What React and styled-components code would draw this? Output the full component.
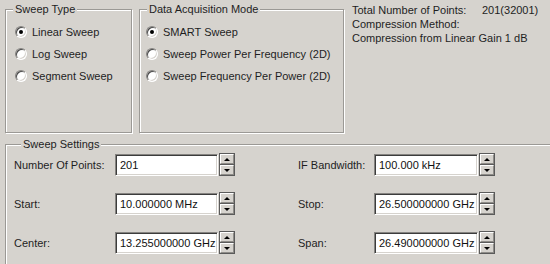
import React from "react";
import styled, { createGlobalStyle } from "styled-components";

const GlobalStyle = createGlobalStyle`
  html, body { margin: 0; padding: 0; background: #d6d3ce; }
  body {
    font-family: "Liberation Sans", Arial, sans-serif;
    font-size: 11px;
    color: #1e1e1e;
  }
`;

const Root = styled.div`
  width: 550px;
  height: 264px;
  overflow: hidden;
  background: #d6d3ce;
  display: flex;
  flex-direction: column;
`;

const TopRow = styled.div`
  display: flex;
  align-items: flex-start;
  padding: 3px 0 0 5px;
  height: 133px;
  box-sizing: border-box;
`;

const GroupBox = styled.fieldset`
  margin: 0 ${(p) => p.$mr || 0}px 0 0;
  padding: 0;
  min-width: 0;
  box-sizing: border-box;
  width: ${(p) => p.$w}px;
  height: ${(p) => p.$h}px;
  flex: none;
  border: 1px solid #9b9995;
  box-shadow: inset 1px 1px 0 #ffffff, 1px 1px 0 #ffffff;
`;

const Legend = styled.legend`
  margin-left: 7px;
  padding: 0 2px;
  line-height: 13px;
  background: #d6d3ce;
`;

const RadioList = styled.div`
  display: flex;
  flex-direction: column;
  padding: 5px 0 0 ${(p) => p.$indent}px;
`;

const RadioRow = styled.label`
  display: flex;
  align-items: center;
  gap: 5px;
  height: 22px;
  white-space: nowrap;
`;

const RadioCircle = styled.span`
  position: relative;
  flex: none;
  width: 12px;
  height: 12px;
  box-sizing: border-box;
  border-radius: 50%;
  border: 1px solid;
  border-color: #858380 #ffffff #ffffff #858380;
  background: #ffffff;
  box-shadow: inset 1px 1px 0 #4a4a4a, inset -1px -1px 0 #d6d3ce;
  &::after {
    content: "";
    display: ${(p) => (p.$checked ? "block" : "none")};
    position: absolute;
    left: 3px;
    top: 3px;
    width: 4px;
    height: 4px;
    border-radius: 50%;
    background: #000;
  }
`;

const InfoGrid = styled.div`
  display: grid;
  grid-template-columns: 130px auto;
  line-height: 14px;
  white-space: nowrap;
`;

const InfoWide = styled.div`
  grid-column: 1 / -1;
`;

const SettingsBox = styled.fieldset`
  margin: 5px 0 0 5px;
  padding: 3px 0 0 8px;
  min-width: 0;
  width: 560px;
  height: 140px;
  box-sizing: border-box;
  flex: none;
  border: 1px solid #9b9995;
  box-shadow: inset 1px 1px 0 #ffffff, 1px 1px 0 #ffffff;
`;

const SettingsGrid = styled.div`
  display: grid;
  grid-template-columns: 101px 183px 76px auto;
  grid-auto-rows: 22px;
  row-gap: 17px;
  align-items: center;
`;

const FieldLabel = styled.span`
  white-space: nowrap;
`;

const SpinField = styled.div`
  display: flex;
  gap: 1px;
  height: 22px;
`;

const TextBox = styled.input`
  width: ${(p) => p.$w}px;
  height: 22px;
  box-sizing: border-box;
  margin: 0;
  padding: 0 0 0 4px;
  border: 1px solid;
  border-color: #858380 #ffffff #ffffff #858380;
  box-shadow: inset 1px 1px 0 #3c3c3c, inset -1px -1px 0 #d6d3ce;
  background: #ffffff;
  font-family: "Liberation Sans", Arial, sans-serif;
  font-size: 11px;
  color: #111;
  outline: none;
`;

const SpinButtons = styled.div`
  display: flex;
  flex-direction: column;
  width: 16px;
  height: 23px;
  box-sizing: border-box;
  border: 1px solid #5a5a5a;
  gap: 1px;
  background: #5a5a5a;
  margin-top: -1px;
`;

const SpinButton = styled.div`
  flex: 1;
  box-sizing: border-box;
  display: flex;
  align-items: center;
  justify-content: center;
  background: #d6d3ce;
  border-top: 1px solid #ffffff;
  border-left: 1px solid #ffffff;
  border-right: 1px solid #8e8c88;
  border-bottom: 1px solid #8e8c88;
  &::before {
    content: "";
    width: 0;
    height: 0;
    border-left: 3px solid transparent;
    border-right: 3px solid transparent;
    ${(p) =>
      p.$down
        ? "border-top: 3px solid #000;"
        : "border-bottom: 3px solid #000;"}
  }
`;

function Radio({ checked, children }) {
  return (
    <RadioRow>
      <RadioCircle $checked={checked} />
      <span>{children}</span>
    </RadioRow>
  );
}

function Spin({ value, width }) {
  return (
    <SpinField>
      <TextBox readOnly value={value} $w={width} />
      <SpinButtons>
        <SpinButton />
        <SpinButton $down />
      </SpinButtons>
    </SpinField>
  );
}

const rows = [
  ["Number Of Points:", "201", "IF Bandwidth:", "100.000 kHz"],
  ["Start:", "10.000000 MHz", "Stop:", "26.500000000 GHz"],
  ["Center:", "13.255000000 GHz", "Span:", "26.490000000 GHz"],
];

export default function App() {
  return (
    <Root>
      <GlobalStyle />
      <TopRow>
        <GroupBox $w={127} $h={130} $mr={7}>
          <Legend>Sweep Type</Legend>
          <RadioList $indent={9}>
            <Radio checked>Linear Sweep</Radio>
            <Radio>Log Sweep</Radio>
            <Radio>Segment Sweep</Radio>
          </RadioList>
        </GroupBox>
        <GroupBox $w={205} $h={130} $mr={8}>
          <Legend>Data Acquisition Mode</Legend>
          <RadioList $indent={6}>
            <Radio checked>SMART Sweep</Radio>
            <Radio>Sweep Power Per Frequency (2D)</Radio>
            <Radio>Sweep Frequency Per Power (2D)</Radio>
          </RadioList>
        </GroupBox>
        <InfoGrid>
          <span>Total Number of Points:</span>
          <span>201(32001)</span>
          <InfoWide>Compression Method:</InfoWide>
          <InfoWide>Compression from Linear Gain 1 dB</InfoWide>
        </InfoGrid>
      </TopRow>
      <SettingsBox>
        <Legend>Sweep Settings</Legend>
        <SettingsGrid>
          {rows.map(([l1, v1, l2, v2]) => (
            <React.Fragment key={l1}>
              <FieldLabel>{l1}</FieldLabel>
              <Spin value={v1} width={103} />
              <FieldLabel>{l2}</FieldLabel>
              <Spin value={v2} width={104} />
            </React.Fragment>
          ))}
        </SettingsGrid>
      </SettingsBox>
    </Root>
  );
}
